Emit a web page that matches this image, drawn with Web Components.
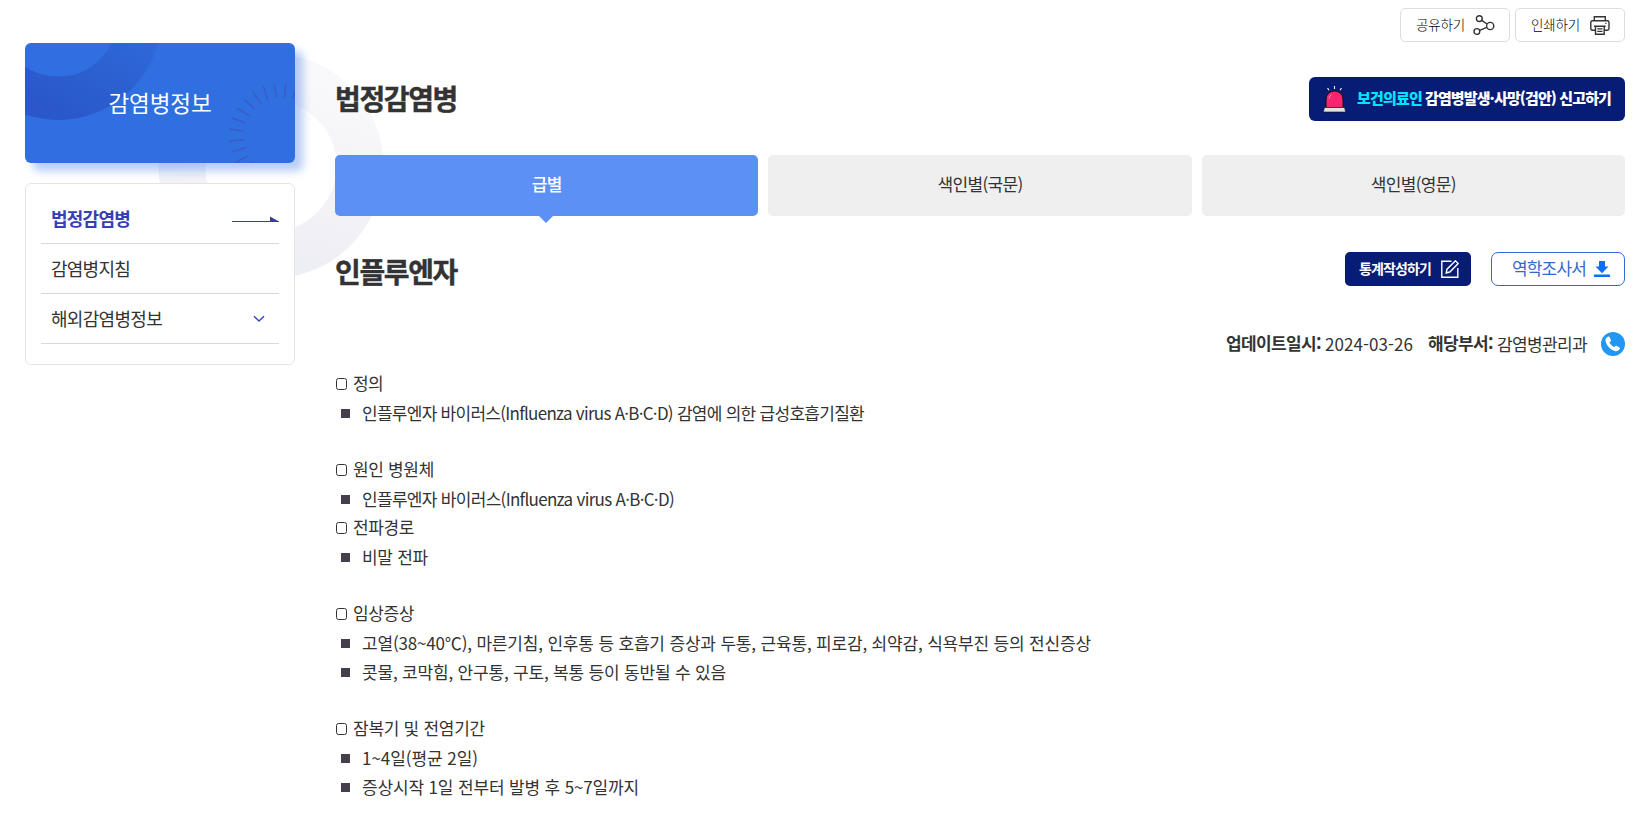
<!DOCTYPE html>
<html lang="ko">
<head>
<meta charset="utf-8">
<title>법정감염병</title>
<style>
    html, body {
        margin: 0;
        height: 814px;
        overflow: hidden;
        background: #fff;
        color: #333;
        font-family: "Noto Sans CJK KR", "Noto Sans", sans-serif;
    }
</style>
</head>
<body>
<kdca-page>
    <kdca-sidebar slot="side" heading="감염병정보">
        <kdca-menu-item active width="79">법정감염병</kdca-menu-item>
        <kdca-menu-item width="79">감염병지침</kdca-menu-item>
        <kdca-menu-item expandable width="111">해외감염병정보</kdca-menu-item>
    </kdca-sidebar>

    <kdca-tools slot="tools"></kdca-tools>

    <kdca-heading slot="title" width="122">
        법정감염병
        <kdca-report slot="actions"></kdca-report>
    </kdca-heading>

    <kdca-tabs slot="tabs">
        <kdca-tab active width="30">급별</kdca-tab>
        <kdca-tab width="85">색인별(국문)</kdca-tab>
        <kdca-tab width="85">색인별(영문)</kdca-tab>
    </kdca-tabs>

    <kdca-heading slot="disease" width="122">
        인플루엔자
        <kdca-actions slot="actions"></kdca-actions>
    </kdca-heading>

    <kdca-meta slot="meta"></kdca-meta>

    <kdca-section>
        <fit-text slot="title" width="30">정의</fit-text>
        <kdca-line width="502">인플루엔자 바이러스(Influenza virus A·B·C·D) 감염에 의한 급성호흡기질환</kdca-line>
    </kdca-section>
    <kdca-section tight>
        <fit-text slot="title" width="81">원인 병원체</fit-text>
        <kdca-line width="312">인플루엔자 바이러스(Influenza virus A·B·C·D)</kdca-line>
    </kdca-section>
    <kdca-section>
        <fit-text slot="title" width="61">전파경로</fit-text>
        <kdca-line width="66">비말 전파</kdca-line>
    </kdca-section>
    <kdca-section>
        <fit-text slot="title" width="61">임상증상</fit-text>
        <kdca-line width="729">고열(38~40℃), 마른기침, 인후통 등 호흡기 증상과 두통, 근육통, 피로감, 쇠약감, 식욕부진 등의 전신증상</kdca-line>
        <kdca-line width="364">콧물, 코막힘, 안구통, 구토, 복통 등이 동반될 수 있음</kdca-line>
    </kdca-section>
    <kdca-section>
        <fit-text slot="title" width="132">잠복기 및 전염기간</fit-text>
        <kdca-line width="116">1~4일(평균 2일)</kdca-line>
        <kdca-line width="277">증상시작 1일 전부터 발병 후 5~7일까지</kdca-line>
    </kdca-section>
</kdca-page>

<script>
/*
class KdcaPage
two columns: side menu and main content, with the large pale ring behind them
*/
class KdcaPage extends HTMLElement {
    constructor() {
        super();
        this.attachShadow({mode: 'open'}).innerHTML = `
            <style>
                :host {
                    display: flex;
                    gap: 40px;
                    box-sizing: border-box;
                    width: 1638px;
                    height: 814px;
                    padding: 8px 13px 0 25px;
                    position: relative;
                    isolation: isolate;
                    overflow: hidden;
                }
                .ring {
                    position: absolute;
                    left: 158px;
                    top: 53px;
                    z-index: -1;
                }
                aside {
                    width: 270px;
                    padding-top: 35px;
                    flex: none;
                }
                main {
                    flex: 1;
                    display: flex;
                    flex-direction: column;
                }
                slot { display: block; }
                slot[name=title] { margin-top: 35px; }
                slot[name=tabs] { margin-top: 34px; }
                slot[name=disease] { margin-top: 36px; }
                slot[name=meta] { margin-top: 46px; }
                .body { margin-top: 13px; }
            </style>
            <svg class="ring" width="226" height="226" viewBox="0 0 226 226">
                <defs>
                    <linearGradient id="g" x1=".6" y1="0" x2=".4" y2="1">
                        <stop offset="0" stop-color="#f9f9fb"/>
                        <stop offset="1" stop-color="#eeeef5"/>
                    </linearGradient>
                </defs>
                <circle cx="113" cy="113" r="89" fill="none" stroke="url(#g)" stroke-width="47"/>
            </svg>
            <aside><slot name="side"></slot></aside>
            <main>
                <slot name="tools"></slot>
                <slot name="title"></slot>
                <slot name="tabs"></slot>
                <slot name="disease"></slot>
                <slot name="meta"></slot>
                <div class="body"><slot></slot></div>
            </main>
        `;
    }
}

/*
class KdcaSidebar
blue banner with the category name and the menu box below it
*/
class KdcaSidebar extends HTMLElement {
    constructor() {
        super();
        this.attachShadow({mode: 'open'}).innerHTML = `
            <style>
                :host { display: block; }
                .banner {
                    display: grid;
                    height: 120px;
                    border-radius: 6px;
                    background: #306fe0;
                    box-shadow: 8px 8px 8px rgba(48, 111, 224, .35);
                    overflow: hidden;
                }
                .banner > * { grid-area: 1 / 1; }
                .banner h2 {
                    margin: 0;
                    padding-bottom: 2px;
                    place-self: center;
                    color: #fff;
                    font-size: 22.5px;
                    font-weight: 400;
                    line-height: 32px;
                }
                nav {
                    margin-top: 20px;
                    box-sizing: border-box;
                    height: 182px;
                    padding: 10px 15px 0;
                    border: 1px solid #e5e5e5;
                    border-radius: 6px;
                    background: #fff;
                }
            </style>
            <div class="banner">
                <svg width="270" height="120" viewBox="25 43 270 120">
                    <defs>
                        <linearGradient id="r" x1=".7" y1=".3" x2=".3" y2="1">
                            <stop offset="0" stop-color="#2f6bdc"/>
                            <stop offset="1" stop-color="#2a57c9"/>
                        </linearGradient>
                    </defs>
                    <circle cx="58" cy="16.6" r="81.7" fill="none" stroke="url(#r)" stroke-width="43.4"/>
                    <!-- short radial strokes in the lower right corner -->
                    <path transform="translate(215 75) scale(.3333)" stroke="#3a5bc8" stroke-width="4.5"
                        d="M240 48l-6 23M212 24l-3 44M178 25l6 43M145 34l14 40M113 49l25 37M86 72l32 29M65 98l38 24M51 129l41 15M43 162l43 6M43 198l43-4M49 231l43-13M63 262l38-21M108 268l8-8"/>
                </svg>
                <h2><fit-text width="103">${this.getAttribute('heading')}</fit-text></h2>
            </div>
            <nav><slot></slot></nav>
        `;
    }
}

/*
class KdcaMenuItem
attributes: active (arrow), expandable (chevron), width
*/
class KdcaMenuItem extends HTMLElement {
    constructor() {
        super();
        let icon = '';
        if (this.hasAttribute('active')) {
            icon = `<svg width="47" height="6" viewBox="0 0 47 6"><path d="M0 5.500h47" stroke="#3a3aa8"/><path d="M38 .5L47 5.500H38z" fill="#3a3aa8"/></svg>`;
        } else if (this.hasAttribute('expandable')) {
            icon = `<svg class="chevron" width="12" height="8" viewBox="0 0 12 8"><path d="M1 1.2L6 6l5-4.8" fill="none" stroke="#3a49c0" stroke-width="1.5"/></svg>`;
        }
        this.attachShadow({mode: 'open'}).innerHTML = `
            <style>
                :host {
                    display: flex;
                    align-items: center;
                    justify-content: space-between;
                    height: 49px;
                    padding-left: 10px;
                    border-bottom: 1px solid #d9d9dc;
                    font-size: 18px;
                    line-height: 28px;
                }
                :host([active]) { color: #3640b4; font-weight: 700; }
                fit-text { margin-bottom: 2px; }
                .chevron { margin-right: 14px; }
            </style>
            <fit-text width="${this.getAttribute('width')}"><slot></slot></fit-text>${icon}
        `;
    }
}

/*
class KdcaTools
share and print buttons
*/
class KdcaTools extends HTMLElement {
    constructor() {
        super();
        this.attachShadow({mode: 'open'}).innerHTML = `
            <style>
                :host { display: flex; justify-content: flex-end; gap: 5px; height: 34px; }
                button {
                    display: flex;
                    align-items: center;
                    justify-content: space-between;
                    box-sizing: border-box;
                    width: 110px;
                    height: 34px;
                    padding: 0 14px 0 15px;
                    border: 1px solid #ddd;
                    border-radius: 5px;
                    background: #fff;
                    color: #000;
                    font: 300 13.5px/20px "Noto Sans CJK KR", sans-serif;
                }
                fit-text { margin-bottom: 3px; }
                svg { fill: none; stroke: #333; stroke-width: 1.4; }
            </style>
            <button>
                <fit-text width="49">공유하기</fit-text>
                <svg width="22" height="20" viewBox="0 0 22 20">
                    <circle cx="6.300" cy="3.600" r="2.900"/><circle cx="17.200" cy="11" r="3.600"/><circle cx="3.900" cy="16.500" r="2.900"/>
                    <path d="M8.700 5.300l5.400 3.700M6.600 15.400l7.200-3.100"/>
                </svg>
            </button>
            <button>
                <fit-text width="49">인쇄하기</fit-text>
                <svg width="20" height="19" viewBox="0 0 20 19">
                    <path d="M4.300 4.800V.8h11v4M5.300 14.300H2.500Q.8 14.300 .8 12.600V6.500Q.8 4.800 2.500 4.800h14.800Q19 4.800 19 6.500v6.100q0 1.700-1.700 1.700H14.300M5.500 10.300h8.700v7.900H5.500zM7.300 12.900h5.200M7.300 15.400h5.200M15.300 7.400h1.200M4 10.300h11.700"/>
                </svg>
            </button>
        `;
    }
}

/*
class KdcaHeading
big heading on the left, slot "actions" on the right
*/
class KdcaHeading extends HTMLElement {
    constructor() {
        super();
        this.attachShadow({mode: 'open'}).innerHTML = `
            <style>
                :host { display: flex; align-items: center; justify-content: space-between; }
                h1 {
                    margin: 0;
                    height: 34px;
                    font-size: 28px;
                    font-weight: 700;
                    line-height: 34px;
                    -webkit-text-stroke: .4px #333;
                }
                :host([slot=title]) h1 { margin-bottom: 2px; }
                :host([slot=disease]) h1 { margin-bottom: -4px; }
            </style>
            <h1><fit-text width="${this.getAttribute('width')}"><slot></slot></fit-text></h1>
            <slot name="actions"></slot>
        `;
    }
}

/*
class KdcaReport
dark button with the siren
*/
class KdcaReport extends HTMLElement {
    constructor() {
        super();
        this.attachShadow({mode: 'open'}).innerHTML = `
            <style>
                :host {
                    display: flex;
                    align-items: center;
                    box-sizing: border-box;
                    width: 316px;
                    height: 44px;
                    padding-left: 14px;
                    border-radius: 6px;
                    background: #071d75;
                    color: #fff;
                    font-size: 15px;
                    font-weight: 900;
                    line-height: 24px;
                }
                svg { margin-right: 11px; }
                fit-text { margin-bottom: 2px; }
                .who { color: #00e4ff; margin-right: 3px; }
            </style>
            <svg width="23" height="27" viewBox="0 0 23 27">
                <path d="M4.500 2l1.500 2.200M11.500 0v3M18.500 2L17 4.200" stroke="#fff" stroke-width="1.1"/>
                <path d="M3 21.500V13a8.500 8 0 0 1 17 0v8.500z" fill="#f7246e" stroke="#111"/>
                <path d="M6 12.500a5.500 5.500 0 0 1 2.500-4" fill="none" stroke="#ff9dbf"/>
                <path d="M1.500 21.500h20l1.200 4.500H.3z" fill="#e4e1df" stroke="#111" stroke-width=".6"/>
            </svg>
            <fit-text class="who" width="65">보건의료인</fit-text>
            <fit-text width="186">감염병발생·사망(검안) 신고하기</fit-text>
        `;
    }
}

/*
class KdcaTabs
row of equally wide tabs
*/
class KdcaTabs extends HTMLElement {
    constructor() {
        super();
        this.attachShadow({mode: 'open'}).innerHTML = `
            <style>
                :host { display: flex; gap: 10px; height: 61px; }
                ::slotted(*) { flex: 1; }
            </style>
            <slot></slot>
        `;
    }
}

class KdcaTab extends HTMLElement {
    constructor() {
        super();
        this.attachShadow({mode: 'open'}).innerHTML = `
            <style>
                :host {
                    display: flex;
                    align-items: center;
                    justify-content: center;
                    position: relative;
                    border-radius: 5px;
                    background: #efefef;
                    font-size: 17px;
                    line-height: 24px;
                }
                :host([active]) { background: #5c90f5; color: #fff; font-weight: 500; }
                fit-text { margin-bottom: 3px; }
                /* pointer under the selected tab */
                :host([active])::after {
                    content: "";
                    position: absolute;
                    left: calc(50% - 7.5px);
                    top: 100%;
                    border: 7.5px solid transparent;
                    border-top: 7px solid #5c90f5;
                    border-bottom: 0;
                }
            </style>
            <fit-text width="${this.getAttribute('width')}"><slot></slot></fit-text>
        `;
    }
}

/*
class KdcaActions
statistics and download buttons
*/
class KdcaActions extends HTMLElement {
    constructor() {
        super();
        this.attachShadow({mode: 'open'}).innerHTML = `
            <style>
                :host { display: flex; gap: 20px; }
                button {
                    display: flex;
                    align-items: center;
                    justify-content: space-between;
                    box-sizing: border-box;
                    height: 34px;
                    border: 0;
                    font-family: "Noto Sans CJK KR", sans-serif;
                }
                fit-text { margin-bottom: 2px; }
                .stat {
                    width: 126px;
                    padding: 0 12px 0 14px;
                    border-radius: 5px;
                    background: #071d75;
                    color: #fff;
                    font-size: 14px;
                    font-weight: 700;
                    line-height: 22px;
                }
                .file {
                    width: 134px;
                    padding: 0 14px 0 20px;
                    border: 1px solid #3568cf;
                    border-radius: 7px;
                    background: #fff;
                    color: #3568cf;
                    font-size: 17px;
                    line-height: 24px;
                }
            </style>
            <button class="stat">
                <fit-text width="72">통계작성하기</fit-text>
                <svg width="18" height="18" viewBox="0 0 18 18" fill="none" stroke="#fff" stroke-width="1.4">
                    <path d="M10.500 1.200H.8v16h16V8M5.200 13l.8-3.800 8.400-8.400 2.800 2.800L8.800 12z"/>
                </svg>
            </button>
            <button class="file">
                <fit-text width="74">역학조사서</fit-text>
                <svg width="16" height="16" viewBox="0 0 16 16" fill="#0d6efd">
                    <path d="M5 0h6v5.500h3.500L8 12.200 1.500 5.500H5zM0 13.500h16V16H0z"/>
                </svg>
            </button>
        `;
    }
}

/*
class KdcaMeta
update date and department
*/
class KdcaMeta extends HTMLElement {
    constructor() {
        super();
        this.attachShadow({mode: 'open'}).innerHTML = `
            <style>
                :host {
                    display: flex;
                    align-items: center;
                    justify-content: flex-end;
                    height: 24px;
                    font-size: 17px;
                    line-height: 24px;
                }
                b, fit-text { margin-bottom: 1px; }
                b { margin-right: 4px; }
                .date { margin-right: 15px; }
                svg { margin-left: 14px; }
            </style>
            <b><fit-text width="95">업데이트일시:</fit-text></b>
            <fit-text class="date" width="88">2024-03-26</fit-text>
            <b><fit-text width="65">해당부서:</fit-text></b>
            <fit-text width="90">감염병관리과</fit-text>
            <svg width="24" height="24" viewBox="0 0 24 24">
                <circle cx="12" cy="12" r="12" fill="#2196f3"/>
                <path d="M6.500 5c.8-.7 1.700-.5 2.100.3l1.300 2.600c.3.700.1 1.200-.4 1.600l-1.100.8c1 2 2.600 3.800 4.800 4.900l.9-1c.5-.5 1-.6 1.600-.3l2.700 1.500c.7.4.8 1.200.3 1.700-1.300 1.800-3 2.500-4.900 1.900C9.200 17.600 5.800 14 4.600 9.300 4.200 7.500 5 6 6.500 5z" fill="#fff"/>
            </svg>
        `;
    }
}

/*
class KdcaSection
title with an empty box in front, followed by its lines
attributes: tight (no blank line after it)
*/
class KdcaSection extends HTMLElement {
    constructor() {
        super();
        this.attachShadow({mode: 'open'}).innerHTML = `
            <style>
                :host { display: block; margin-bottom: 28px; font-size: 17px; line-height: 29px; }
                :host([tight]) { margin-bottom: 0; }
                .title { display: flex; align-items: center; height: 29px; padding-left: 1px; }
                ::slotted([slot=title]) { margin-bottom: 2px; }
                .box {
                    box-sizing: border-box;
                    width: 11px;
                    height: 12px;
                    margin-right: 6px;
                    border: 1px solid #333;
                    border-radius: 2.5px;
                }
            </style>
            <div class="title"><span class="box"></span><slot name="title"></slot></div>
            <slot></slot>
        `;
    }
}

class KdcaLine extends HTMLElement {
    constructor() {
        super();
        this.attachShadow({mode: 'open'}).innerHTML = `
            <style>
                :host { display: flex; align-items: center; height: 29px; padding-left: 6px; }
                .bullet { width: 9px; height: 9px; margin: 2px 12px 0 0; background: #443f4b; }
                fit-text { margin-bottom: 1px; }
            </style>
            <span class="bullet"></span>
            <fit-text width="${this.getAttribute('width')}"><slot></slot></fit-text>
        `;
    }
}

/*
class FitText
one line of text, tracked so that it takes up the given width
*/
class FitText extends HTMLElement {
    constructor() {
        super();
        this.attachShadow({mode: 'open'}).innerHTML = `
            <style>
                :host { display: inline-block; white-space: nowrap; }
            </style>
            <slot></slot>
        `;
    }

    connectedCallback() {
        const width = Number(this.getAttribute('width'));
        const slot = this.querySelector('slot');
        const nodes = slot ? slot.assignedNodes() : [...this.childNodes];
        const text = nodes.map(n => n.textContent).join('').trim();
        const natural = this.getBoundingClientRect().width;
        this.style.letterSpacing = (width - natural) / text.length + 'px';
    }
}

customElements.define('kdca-page', KdcaPage);
customElements.define('kdca-sidebar', KdcaSidebar);
customElements.define('kdca-menu-item', KdcaMenuItem);
customElements.define('kdca-tools', KdcaTools);
customElements.define('kdca-heading', KdcaHeading);
customElements.define('kdca-report', KdcaReport);
customElements.define('kdca-tabs', KdcaTabs);
customElements.define('kdca-tab', KdcaTab);
customElements.define('kdca-actions', KdcaActions);
customElements.define('kdca-meta', KdcaMeta);
customElements.define('kdca-section', KdcaSection);
customElements.define('kdca-line', KdcaLine);
customElements.define('fit-text', FitText);
</script>
</body>
</html>
